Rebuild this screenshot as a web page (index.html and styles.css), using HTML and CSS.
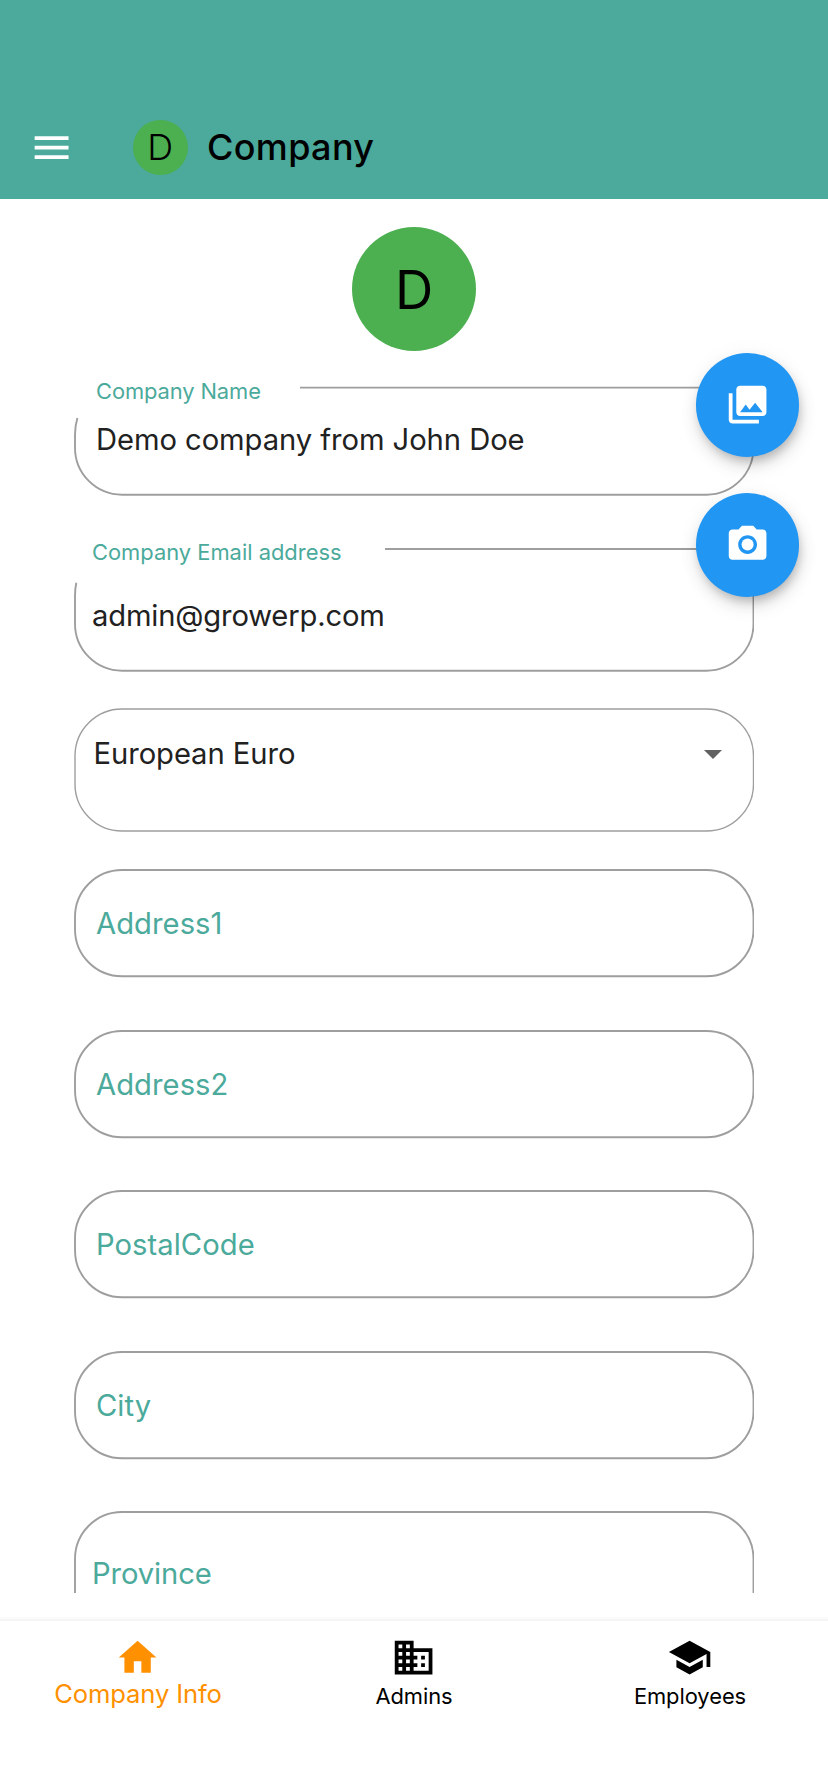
FILE: index.html
```html
<!DOCTYPE html>
<html lang="en">
<head>
<meta charset="utf-8">
<title>Company</title>
<link rel="stylesheet" href="styles.css">
</head>
<body>
<div class="app">
  <header class="bar">
    <svg class="icon menu" viewBox="0 0 24 24"><path d="M3 18h18v-2H3v2zm0-5h18v-2H3v2zm0-7v2h18V6H3z"/></svg>
    <div class="avatar small">D</div>
    <h1 class="title">Company</h1>
  </header>

  <main class="content">
    <div class="avatar large"><span>D</span></div>
    <form class="form">
      <div class="field name">
        <svg class="outline"><path d="M226 1.6H632.5A47 47 0 0 1 679.5 48.6V61.7A47 47 0 0 1 632.5 108.7H48A47 47 0 0 1 1 61.7V48.6Q1 40 3.4 32"/></svg>
        <label class="label">Company Name</label>
        <div class="value">Demo company from John Doe</div>
      </div>
      <div class="field email">
        <svg class="outline"><path d="M311 2H632.5A47 47 0 0 1 679.5 49V76.7A47 47 0 0 1 632.5 123.7H48A47 47 0 0 1 1 76.7V49Q1 42 2.3 35.8"/></svg>
        <label class="label">Company Email address</label>
        <div class="value">admin@growerp.com</div>
      </div>
      <div class="field select">
        <svg class="outline thin"><rect x="1" y="1" width="678.5" height="122" rx="47"/></svg>
        <div class="value">European Euro</div>
        <svg class="caret" viewBox="0 0 18 9"><path d="M0 0h18L9 9z"/></svg>
      </div>
      <div class="field address1"><svg class="outline"><rect x="1" y="2" width="678.5" height="106.3" rx="47"/></svg><div class="value hint">Address1</div></div>
      <div class="field address2"><svg class="outline"><rect x="1" y="2" width="678.5" height="106.3" rx="47"/></svg><div class="value hint">Address2</div></div>
      <div class="field postal"><svg class="outline"><rect x="1" y="2" width="678.5" height="106.3" rx="47"/></svg><div class="value hint">PostalCode</div></div>
      <div class="field city"><svg class="outline"><rect x="1" y="2" width="678.5" height="106.3" rx="47"/></svg><div class="value hint">City</div></div>
      <div class="field province"><svg class="outline"><rect x="1" y="2" width="678.5" height="180" rx="47"/></svg><div class="value hint">Province</div></div>
    </form>
    <div class="fabs">
      <button class="fab" type="button"><svg class="icon" viewBox="0 0 24 24"><path d="M22 16V4c0-1.1-.9-2-2-2H8c-1.1 0-2 .9-2 2v12c0 1.1.9 2 2 2h12c1.1 0 2-.9 2-2zm-11-4l2.03 2.71L16 11l4 5H8l3-4zM2 6v14c0 1.1.9 2 2 2h14v-2H4V6H2z"/></svg></button>
      <button class="fab" type="button"><svg class="icon" viewBox="0 0 24 24"><circle cx="12" cy="12" r="3.2"/><path d="M9 2L7.17 4H4c-1.1 0-2 .9-2 2v12c0 1.1.9 2 2 2h16c1.1 0 2-.9 2-2V6c0-1.1-.9-2-2-2h-3.17L15 2H9zm3 15c-2.76 0-5-2.24-5-5s2.24-5 5-5 5 2.24 5 5-2.24 5-5 5z"/></svg></button>
    </div>
  </main>

  <nav class="tabs">
    <a class="tab active"><svg class="icon" viewBox="0 0 24 24"><path d="M10 20v-6h4v6h5v-8h3L12 3 2 12h3v8z"/></svg><span>Company Info</span></a>
    <a class="tab"><svg class="icon" viewBox="0 0 24 24"><path d="M12 7V3H2v18h20V7H12zM6 19H4v-2h2v2zm0-4H4v-2h2v2zm0-4H4V9h2v2zm0-4H4V5h2v2zm4 12H8v-2h2v2zm0-4H8v-2h2v2zm0-4H8V9h2v2zm0-4H8V5h2v2zm10 12h-8v-2h2v-2h-2v-2h2v-2h-2V9h8v10zm-2-8h-2v2h2v-2zm0 4h-2v2h2v-2z"/></svg><span>Admins</span></a>
    <a class="tab"><svg class="icon" viewBox="0 0 24 24"><path d="M5 13.18v4L12 21l7-3.82v-4L12 17l-7-3.82zM12 3L1 9l11 6 9-4.91V17h2V9L12 3z"/></svg><span>Employees</span></a>
  </nav>
</div>
</body>
</html>
```
FILE: styles.css
```css
* { box-sizing: border-box; }
body { margin: 0; background: #fff; font-family: Inter, "Liberation Sans", sans-serif; color: #212121; }
.app { display: flex; flex-direction: column; height: 1792px; width: 828px; overflow: hidden; }
.icon { width: 45.2px; height: 45.2px; fill: currentColor; display: block; flex: none; }

/* App bar */
.bar { height: 199px; background: #4baa9b; display: flex; align-items: center; padding: 96px 0 0 29.4px; color: #fff; flex: none; }
.avatar { border-radius: 50%; background: #4caf50; color: #000; display: flex; align-items: center; justify-content: center; flex: none; }
.small { width: 55.4px; height: 55.4px; margin-left: 58px; font-size: 36px; font-weight: 300; }
.title { margin: 0 0 2px 19px; font-size: 36px; font-weight: 500; line-height: 44px; color: #000; letter-spacing: 0.35px; white-space: nowrap; }

/* Form */
.content { position: relative; height: 1394px; padding: 28px 74px 0; overflow: hidden; flex: none; }
.large { width: 124px; height: 124px; margin: 0 auto; padding-top: 1px; font-size: 53px; }
.form { display: flex; flex-direction: column; height: 1252px; margin-top: -10px; padding-top: 45px; overflow: hidden; }
.field { position: relative; height: 110px; flex: none; white-space: nowrap; }
.outline { position: absolute; left: 0; top: 0; width: 680px; height: 100%; fill: none; stroke: #9e9e9e; stroke-width: 1.88px; }
.thin { stroke-width: 1.4px; }
.label { display: block; height: 28px; font-size: 21.9px; line-height: 28px; color: #4baa9b; }
.value { font-size: 29.2px; line-height: 36px; padding-left: 22px; letter-spacing: -0.06px; }
.hint { color: #4baa9b; padding-top: 38px; letter-spacing: 0.05px; }
.name, .email { display: flex; flex-direction: column; }
.name .label { margin-top: -9px; padding-left: 22px; letter-spacing: -0.1px; }
.name .value { margin-top: 17px; }
.email { margin-top: 51px; height: 125px; }
.email .label { margin-top: -9px; padding-left: 18px; }
.email .value { margin-top: 32px; padding-left: 18px; letter-spacing: -0.17px; }
.select { margin-top: 36px; height: 124px; display: flex; justify-content: space-between; padding: 28px 32px 0 0; }
.select .value { padding-left: 19.5px; }
.caret { width: 18px; height: 9px; margin-top: 14px; fill: #616161; }
.address1 { margin-top: 36px; }
.address2, .city { margin-top: 51px; }
.postal { margin-top: 50px; }
.province { height: 128px; margin-top: 50px; }
.province .hint { padding: 46px 0 0 18px; letter-spacing: -0.1px; }

/* Floating actions */
.fabs { position: absolute; left: 695.5px; top: 154.3px; display: flex; flex-direction: column; gap: 36.6px; }
.fab { width: 103.4px; height: 103.4px; border: 0; padding: 0; border-radius: 50%; background: #2196f3; color: #fff; display: flex; align-items: center; justify-content: center; box-shadow: 2px 6px 10px -2px rgba(0,0,0,.2), 2px 10px 18px rgba(0,0,0,.1), 0 2px 22px rgba(0,0,0,.05); }

/* Tab bar */
.tabs { display: flex; height: 199px; flex: none; padding-top: 41.5px; background: linear-gradient(#fff, #f3f3f3) 0 23px / 100% 5px no-repeat; }
.tab { flex: 1; display: flex; flex-direction: column; align-items: center; color: #000; font-size: 21.9px; line-height: 28px; letter-spacing: -0.05px; }
.tab span { margin-top: 2.3px; }
.active { color: #ff9000; font-size: 25.6px; line-height: 32px; letter-spacing: -0.15px; }
.active span { margin-top: -1.7px; }
```
